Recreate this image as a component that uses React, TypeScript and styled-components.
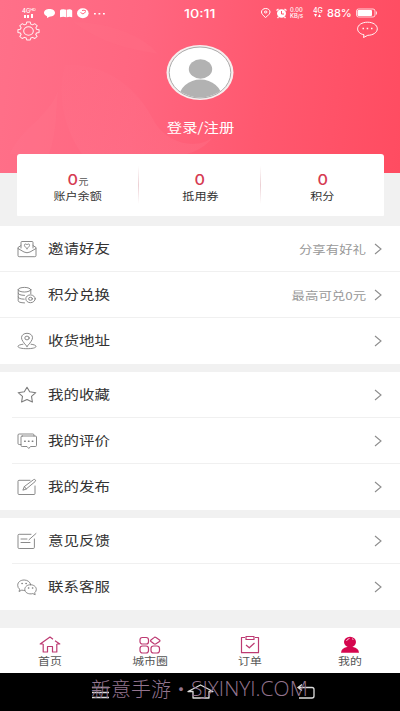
import React from "react";
import styled, { createGlobalStyle } from "styled-components";

const GlobalStyle = createGlobalStyle`
  * { box-sizing: border-box; }
  body {
    margin: 0;
    font-family: "Noto Sans", "Noto Sans CJK SC", sans-serif;
    background: #f1f1f1;
  }
  svg { display: block; flex: none; }
`;

const Screen = styled.div`
  width: 400px;
  height: 711px;
  display: flex;
  flex-direction: column;
  background: #f1f1f1;
  overflow: hidden;
`;

const Wide = styled.span<{ $size: number; $color: string; $origin?: string; $scale?: number; $weight?: number }>`
  display: inline-block;
  white-space: nowrap;
  font-family: "Noto Sans CJK SC", sans-serif;
  font-size: ${(p) => p.$size}px;
  line-height: ${(p) => Math.round(p.$size * 1.3)}px;
  font-weight: ${(p) => p.$weight ?? 400};
  color: ${(p) => p.$color};
  transform: scaleX(${(p) => p.$scale ?? 1.19});
  transform-origin: ${(p) => p.$origin ?? "center"};
`;

const Header = styled.header`
  position: relative;
  height: 173px;
  flex: none;
  display: flex;
  flex-direction: column;
  align-items: center;
  background: linear-gradient(97deg, #ff7089 0%, #ff6680 35%, #ff586f 65%, #ff4c61 100%);
`;

const Backdrop = styled.svg`
  position: absolute;
  inset: 0;
`;

const StatusBar = styled.div`
  position: relative;
  width: 100%;
  height: 21px;
  padding: 5px 23px 0 22px;
  display: grid;
  grid-template-columns: 162px 1fr 116px;
  color: #fff;
`;

const StatusGroup = styled.div`
  display: flex;
  align-items: center;
  height: 16px;
`;

const Clock = styled.div`
  height: 16px;
  padding-top: 1px;
  font: 500 11.5px/16px Inter, sans-serif;
  transform: scaleX(1.25);
  transform-origin: left;
`;

const Tiny = styled.div<{ $w: number; $gap: number; $size?: number }>`
  width: ${(p) => p.$w}px;
  margin-right: ${(p) => p.$gap}px;
  font: 500 ${(p) => p.$size ?? 6}px/6px Inter, sans-serif;
  white-space: nowrap;
`;

const Percent = styled.div`
  width: 29px;
  font: 500 11px/16px Inter, sans-serif;
  white-space: nowrap;
`;

const Tools = styled.div`
  position: relative;
  width: 100%;
  height: 20px;
  padding: 0 22px 0 17px;
  display: flex;
  justify-content: space-between;
`;

const AvatarBox = styled.div`
  position: relative;
  margin-top: 3px;
  height: 57px;
`;

const Login = styled.div`
  position: relative;
  margin: 17px 0 0 1px;
  height: 18px;
  display: flex;
`;

const Stats = styled.section`
  position: relative;
  flex: none;
  width: 367px;
  height: 62px;
  margin: -19px 0 10px 17px;
  display: grid;
  grid-template-columns: 122px 122px 123px;
  background: #fff;
  border-radius: 3px 3px 1px 1px;
`;

const Stat = styled.div`
  display: flex;
  flex-direction: column;
  align-items: center;
  padding-top: 16px;
  background: linear-gradient(#fff0, #ecd0d4 50%, #fff0) right center / 1px 38px no-repeat;
  &:last-child { background: none; }
`;

const StatValue = styled.div`
  display: flex;
  align-items: baseline;
  height: 19px;
  line-height: 19px;
`;

const Digit = styled.span`
  font: 500 14.5px/19px Inter, sans-serif;
  color: #d63b52;
  transform: scaleX(1.12);
  &:not(:last-child) { margin-right: 2px; }
`;

const Group = styled.section`
  flex: none;
  margin-bottom: 8px;
  background: #fff;
`;

const Row = styled.div<{ $inset: number }>`
  height: 46px;
  display: flex;
  align-items: center;
  padding: 0 18px 0 16px;
  background: linear-gradient(#f0f0f0, #f0f0f0) ${(p) => p.$inset}px bottom / 100% 1px no-repeat;
  &:last-child { background: none; }
`;

const RowLabel = styled.div`
  display: flex;
  flex: 1;
  margin-left: 10px;
`;

const Hint = styled.div`
  display: flex;
  margin-right: 8px;
`;

const Tabs = styled.nav`
  flex: none;
  height: 45px;
  margin-top: 10px;
  display: grid;
  grid-template-columns: repeat(4, 1fr);
  background: #fff;
`;

const Tab = styled.div`
  display: flex;
  flex-direction: column;
  align-items: center;
  padding-top: 7px;
`;

const SystemBar = styled.footer`
  position: relative;
  flex: 1;
  display: flex;
  padding-left: 91px;
  background: #000;
`;

const SystemIcons = styled.svg`
  position: absolute;
  inset: 0;
`;

const Watermark = styled.div`
  position: relative;
  display: flex;
  color: #94758f;
  font: 300 20px/31px "Noto Sans CJK SC", sans-serif;
  white-space: nowrap;
`;

const Dot = styled.span`
  width: 20px;
  text-align: center;
`;

const Domain = styled.span`
  font-family: "Open Sans", sans-serif;
  font-weight: 300;
  font-size: 19.5px;
  transform: scaleX(1.075);
  transform-origin: left;
`;

type IconName =
  | "invite" | "coins" | "address" | "star" | "comments" | "compose" | "feedback" | "service";

const iconShapes: Record<IconName, React.ReactNode> = {
  invite: (
    <>
      <path d="M5 9V3.500q0-1 1-1h10q1 0 1 1V9M5 6.500 2 8.500v8q0 1.200 1.200 1.200h15.600q1.200 0 1.200-1.200v-8l-3-2M2 9.500l6 3.500q3 1.500 6 0l6-3.500" />
      <path d="M11 9.500C7.500 7.200 8 5 9.600 5q1 0 1.400.9Q11.500 5 12.400 5C14 5 14.500 7.200 11 9.500Z" />
    </>
  ),
  coins: (
    <>
      <ellipse cx="8.500" cy="4.700" rx="6.300" ry="2.300" />
      <path d="M2.200 4.700v11q0 2 6.300 2.200M14.800 4.700v4M2.200 8.200q0 2 6.300 2.200M2.200 12q0 2 6 2.200" />
      <ellipse cx="14.500" cy="13.800" rx="4.700" ry="3.900" />
      <ellipse cx="14.500" cy="13.800" rx="1.900" ry="1.500" />
    </>
  ),
  address: (
    <>
      <path d="M11 15.500C7.500 11.500 5.500 9 5.500 6.700 5.500 4 8 2.300 11 2.300s5.500 1.700 5.500 4.400c0 2.300-2 4.800-5.500 8.800Z" />
      <ellipse cx="11" cy="7" rx="2.200" ry="1.900" />
      <path d="M7 13.200c-3 .4-5 1.200-5 2.200 0 1.500 4 2.300 9 2.300s9-.8 9-2.300c0-1-2-1.800-5-2.200" />
    </>
  ),
  star: (
    <path d="m11 2.300 2.700 4.500 6.100.9-4.300 3.700.9 5.600-5.400-2.500L5.600 17l.9-5.600-4.300-3.700 6.100-.9Z" strokeWidth="1.100" />
  ),
  comments: (
    <>
      <path d="M5 13.500H3.300q-1.300 0-1.300-1V4q0-1 1.300-1h13.500q1.200 0 1.200 1v1" />
      <path d="M6.200 5h13q1.300 0 1.300 1v8.500q0 1-1.300 1h-4.700L12.800 17.500 11 15.500H6.200q-1.200 0-1.200-1V6q0-1 1.200-1Z" />
      <path d="M8.700 10.200h.5M12.500 10.200h.5M16.300 10.200h.5" strokeWidth="1.500" />
    </>
  ),
  compose: (
    <>
      <path d="M14 3.300H3q-1 0-1 1v12.200q0 1 1 1h15q1 0 1-1V9" />
      <path d="m7 12.800 1.400-3.300L17.500 2.700q1.500-.7 2 .4.400.8-.5 1.600L10.200 12Z M8.400 9.500l1.800 2.500" />
    </>
  ),
  feedback: (
    <path d="M15 3.300H3.200q-1.200 0-1.200 1v12.200q0 1 1.200 1h14q1.200 0 1.200-1V8M20 2.500 13 8.700M5 8h6M5 11.500h9" />
  ),
  service: (
    <>
      <path d="M8.800 13.400q-1.600.2-3-.3L3 14.500l.7-2.300Q1.700 10.800 1.700 8.300C1.700 5 4.600 3 8.200 3c3.300 0 5.900 1.900 6.500 4.600" />
      <path d="M14.500 7.700c3.200 0 5.800 2 5.800 4.700q0 2-1.600 3.300l.5 2-2.400-1.100c-4.100 1-8-.8-8-4.200 0-2.700 2.500-4.700 5.700-4.700Z" />
      <path d="M6 6.500h.2M10 6.500h.2M12.500 11h.2M16.500 11h.2" strokeWidth="1.500" />
    </>
  ),
};

const RowIcon = ({ name }: { name: IconName }) => (
  <svg width="22" height="20" viewBox="0 0 22 20" fill="none" stroke="#7d7d7d" strokeWidth="0.900" strokeLinecap="round" strokeLinejoin="round">
    {iconShapes[name]}
  </svg>
);

const Chevron = () => (
  <svg width="8" height="12" viewBox="0 0 8 12" fill="none" stroke="#8d8d8d" strokeWidth="1.100">
    <path d="m1 1 6 5-6 5" />
  </svg>
);

const LiftedText = styled.div`
  display: flex;
  margin-top: -3px;
`;

const groups: { inset: number; rows: { icon: IconName; label: string; hint?: string }[] }[] = [
  {
    inset: 0,
    rows: [
      { icon: "invite", label: "邀请好友", hint: "分享有好礼" },
      { icon: "coins", label: "积分兑换", hint: "最高可兑0元" },
      { icon: "address", label: "收货地址" },
    ],
  },
  {
    inset: 12,
    rows: [
      { icon: "star", label: "我的收藏" },
      { icon: "comments", label: "我的评价" },
      { icon: "compose", label: "我的发布" },
    ],
  },
  {
    inset: 12,
    rows: [
      { icon: "feedback", label: "意见反馈" },
      { icon: "service", label: "联系客服" },
    ],
  },
];

const stats = [
  { value: "0", unit: "元", label: "账户余额" },
  { value: "0", unit: "", label: "抵用券" },
  { value: "0", unit: "", label: "积分" },
];

const tabs = [
  {
    label: "首页",
    icon: <path d="M4.200 9H1.200L11 2l3 2.300M16 5.800 20.800 9h-3M4.200 9v8h4.300v-5.500h5V17h4.300V9" />,
  },
  {
    label: "城市圈",
    icon: (
      <>
        <rect x="1" y="2.500" width="8.500" height="6.500" rx="2.300" />
        <path d="M15 2.600q1-.9 2 0l3.500 2.400q.9.700 0 1.500L17 8.800q-1 .7-2 0l-3-2.300q-.9-.8 0-1.500Z" />
        <rect x="1" y="11" width="8.500" height="7" rx="2.500" />
        <rect x="12" y="11" width="8.500" height="7" rx="2.500" />
      </>
    ),
  },
  {
    label: "订单",
    icon: <path d="M6 2.500H2.500v15.200h17V2.500H16M7 1.500h8v3H7ZM7 10l3.300 2.800L15.500 8" />,
  },
  {
    label: "我的",
    icon: (
      <g stroke="none" fill="#d5064e">
        <ellipse cx="11" cy="7" rx="6" ry="5.300" />
        <path d="M2 17.700q.4-4.700 6-5.700h6q5.600 1 6 5.700Z" />
        <path d="M7.500 6q.6-2 3-2.500M13 3.700q1 .4 1.400 1" fill="none" stroke="#fff" strokeWidth=".8" />
      </g>
    ),
  },
];

export default function App() {
  return (
    <>
      <GlobalStyle />
      <Screen>
        <Header>
          <Backdrop width="400" height="173" viewBox="0 0 400 173">
            <defs>
              <linearGradient id="petal" x1="0" y1="0" x2="1" y2="1">
                <stop offset="0" stopColor="#ff879c" stopOpacity=".03" />
                <stop offset="1" stopColor="#ff879c" stopOpacity=".2" />
              </linearGradient>
            </defs>
            <path d="M65 65C105 63 137 86 155 123C170 146 199 149 213 137C199 156 173 159 145 154H82C61 124 58 89 65 65Z" fill="url(#petal)" />
            <path d="M58 91C48 118 21 128 10 154H49C57 134 56 109 58 91Z" fill="#ff879c" opacity=".1" />
            <path d="M73 22C103 22 141 33 158 54C123 48 101 42 73 22Z" fill="#ff879c" opacity=".08" />
          </Backdrop>
          <StatusBar>
            <StatusGroup>
              <Tiny $w={18} $gap={4}>
                4Gᴴᴰ
                <svg width="12" height="4" viewBox="0 0 12 4" fill="#fff">
                  <path d="M2 1h2v3H2ZM5 1h2v3H5ZM9 0h2v4H9Z" />
                </svg>
              </Tiny>
              <svg width="62" height="12" viewBox="0 0 62 12" fill="#fff">
                <path d="M5.500 2C8.500 2 11 3.500 11 5.800S8.700 9.600 6 9.600L3 11V9.200C1.100 8.600 0 7.400 0 5.800 0 3.500 2.500 2 5.500 2Z" />
                <path d="M17 2.500q3-.8 5.200.3v7.400q-2.700-.8-6.200 0V3.500ZM27 2.500q-2-.6-4.200.3v7.400q2.700-.8 5.400 0V3.500Z" />
                <ellipse cx="38.800" cy="6.200" rx="5.800" ry="5" />
                <path d="M36.500 5.500 39 7l3-2.500M38 3.500q2-.9 4 .5" stroke="#ff6882" strokeWidth="1" fill="none" />
                <path d="M50 6h1.800v1.400H50ZM54.500 6h1.800v1.400h-1.800ZM59 6h1.800v1.400H59Z" />
              </svg>
            </StatusGroup>
            <Clock>10:11</Clock>
            <StatusGroup>
              <svg width="29" height="12" viewBox="0 0 29 12" fill="none" stroke="#fff">
                <path d="M4.500 10.500C1.500 8 .5 6.500 .5 5 .5 3 2.200 1.500 4.700 1.500S9 3 9 5c0 1.500-1.200 3-4.500 5.500Z" />
                <ellipse cx="4.700" cy="5" rx="1.300" ry="1" />
                <ellipse cx="20.500" cy="6.500" rx="4.500" ry="4.200" fill="#fff" stroke="none" />
                <path d="m15.500 3.500 2-1.500M25.500 3.500l-2-1.500M17.500 10l-1 1M23.500 10l1 1" strokeWidth="1.300" />
                <path d="M20.500 4v3h2.500" stroke="#ff566d" />
              </svg>
              <Tiny $w={15} $gap={8} $size={5.8}>
                0.00
                <br />
                KB/s
              </Tiny>
              <Tiny $w={9} $gap={5} $size={7}>
                4G
                <svg width="9" height="4" viewBox="0 0 9 4" fill="#fff">
                  <path d="M1 0h3L2.500 3ZM5 3h3L6.500 0Z" />
                </svg>
              </Tiny>
              <Percent>88%</Percent>
              <svg width="21" height="10" viewBox="0 0 21 10" fill="none" stroke="#fff">
                <rect x=".5" y="1" width="18.500" height="8" rx="2" strokeOpacity=".75" />
                <rect x="1.500" y="2" width="14.500" height="6" rx="1" fill="#fff" stroke="none" />
                <path d="M20.500 3.500v3" strokeOpacity=".75" />
              </svg>
            </StatusGroup>
          </StatusBar>
          <Tools>
            <svg width="23" height="20" viewBox="-11.500 -10 23 20" fill="none" stroke="#fff" strokeWidth=".9" strokeLinejoin="round" strokeOpacity=".9">
              <g transform="scale(1.150 1)">
                <path d="M-1.500-9h3l.5 2.200 1.500.7 2-1.200 2.100 2.100-1.200 1.900.6 1.600 2.200.4v2.800l-2.200.5-.7 1.500 1.200 2-2 2-2-1.200-1.500.7-.5 2h-3l-.5-2-1.500-.7-2 1.200-2.100-2 1.200-2-.7-1.500-2.100-.5v-2.800l2.100-.4.700-1.600-1.200-1.900 2.100-2.100 2 1.200 1.500-.7Z" />
                <circle r="4.200" />
              </g>
            </svg>
            <svg width="21" height="18" viewBox="0 0 21 18" fill="none" stroke="#fff" strokeOpacity=".95">
              <path d="M7 13.800C3 13 .6 10.700.6 7.800.6 4 5 1.200 10.500 1.200s9.800 2.800 9.800 6.600-4.500 6.500-9.500 6.500L6.500 16.500Z" strokeLinejoin="round" />
              <path d="M5.500 7.500H7M9.700 7.500h1.500M14 7.500h1.500" strokeWidth="1.400" />
            </svg>
          </Tools>
          <AvatarBox>
            <svg width="68" height="57" viewBox="0 0 68 57">
              <defs>
                <clipPath id="face">
                  <ellipse cx="34" cy="28.500" rx="30.300" ry="25" />
                </clipPath>
              </defs>
              <ellipse cx="34" cy="28.500" rx="33.500" ry="27.500" fill="#f7eeee" />
              <ellipse cx="34" cy="28.500" rx="30.800" ry="25.500" fill="#fff" stroke="#aaa" strokeWidth="1" />
              <g fill="#b2b2b2" clipPath="url(#face)">
                <ellipse cx="34.500" cy="25" rx="11.700" ry="9.700" />
                <ellipse cx="34.500" cy="54" rx="21.500" ry="18.500" />
              </g>
            </svg>
          </AvatarBox>
          <Login>
            <Wide $size={13} $color="#fff" $scale={1.18}>登录/注册</Wide>
          </Login>
        </Header>

        <Stats>
          {stats.map((s) => (
            <Stat key={s.label}>
              <StatValue>
                <Digit>{s.value}</Digit>
                {s.unit && <Wide $size={9} $color="#555" $scale={1.1}>{s.unit}</Wide>}
              </StatValue>
              <Wide $size={10.3} $color="#333" $scale={1.17}>{s.label}</Wide>
            </Stat>
          ))}
        </Stats>

        {groups.map((g, i) => (
          <Group key={i}>
            {g.rows.map((r) => (
              <Row key={r.label} $inset={g.inset}>
                <RowIcon name={r.icon} />
                <RowLabel>
                  <LiftedText>
                    <Wide $size={13} $color="#333" $origin="left">{r.label}</Wide>
                  </LiftedText>
                </RowLabel>
                {r.hint && (
                  <Hint>
                    <Wide $size={11} $color="#999" $origin="right" $scale={1.22}>{r.hint}</Wide>
                  </Hint>
                )}
                <Chevron />
              </Row>
            ))}
          </Group>
        ))}

        <Tabs>
          {tabs.map((t) => (
            <Tab key={t.label}>
              <svg width="22" height="19" viewBox="0 0 22 19" fill="none" stroke="#bd3a72" strokeWidth="1.200" strokeLinejoin="round">
                {t.icon}
              </svg>
              <Wide $size={10} $color="#555">{t.label}</Wide>
            </Tab>
          ))}
        </Tabs>

        <SystemBar>
          <SystemIcons width="400" height="38" viewBox="0 0 400 38" fill="none" stroke="#ddd" strokeWidth="1.300">
            <path d="M92 14.500h17M92 19.500h17M92 24.500h17" />
            <path d="m188 18.500 12.500-6.500L213 18.500h-4V25h-16v-6.500Z" strokeLinejoin="round" />
            <path d="m302 11.500-4 3 4 3M298 14.500h14q2 0 2 2V23q0 2-2 2h-13" />
          </SystemIcons>
          <Watermark>
            <span>新意手游</span>
            <Dot>•</Dot>
            <Domain>SJXINYI.COM</Domain>
          </Watermark>
        </SystemBar>
      </Screen>
    </>
  );
}
